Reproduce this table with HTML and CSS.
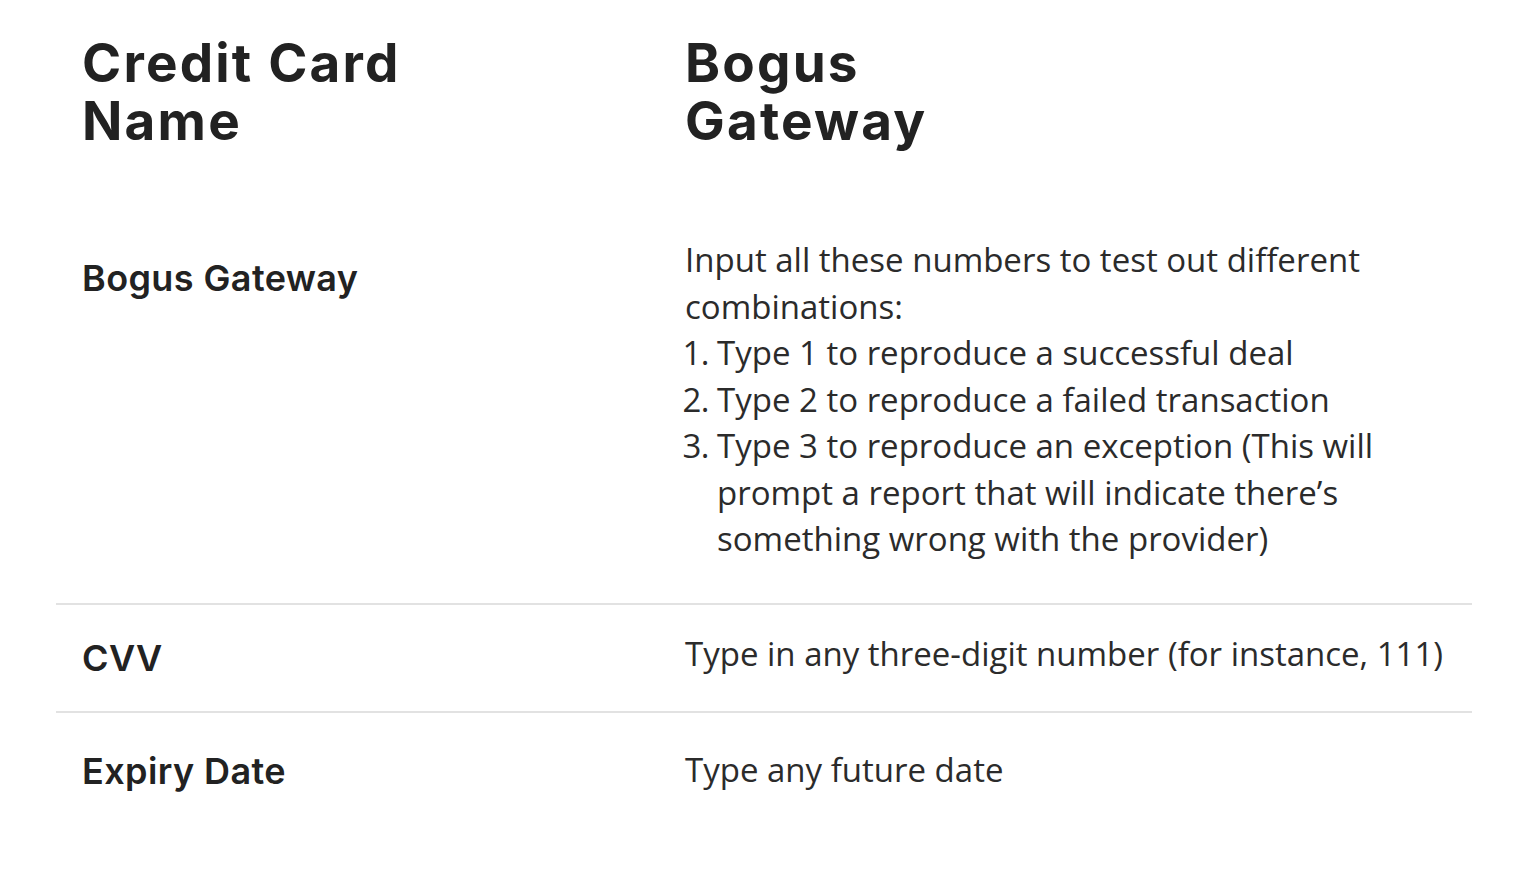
FILE: index.html
```html
<!DOCTYPE html>
<html lang="en">
<head>
<meta charset="utf-8">
<title>Bogus Gateway test values</title>
<link rel="stylesheet" href="styles.css">
</head>
<body>
<div class="table">
  <div class="row head">
    <div class="cell key"><h2 class="th">Credit Card<br>Name</h2></div>
    <div class="cell val"><h2 class="th">Bogus<br>Gateway</h2></div>
  </div>
  <div class="row first">
    <div class="cell key"><span class="label">Bogus Gateway</span></div>
    <div class="cell val">
      <p class="desc">Input all these numbers to test out different combinations:</p>
      <ol class="list">
        <li>Type 1 to reproduce a successful deal</li>
        <li>Type 2 to reproduce a failed transaction</li>
        <li>Type 3 to reproduce an exception (This will prompt a report that will indicate there’s something wrong with the provider)</li>
      </ol>
    </div>
  </div>
  <div class="row mid">
    <div class="cell key"><span class="label">CVV</span></div>
    <div class="cell val"><p class="desc raised">Type in any three-digit number (for instance, 111)</p></div>
  </div>
  <div class="row last">
    <div class="cell key"><span class="label">Expiry Date</span></div>
    <div class="cell val"><p class="desc">Type any future date</p></div>
  </div>
</div>
</body>
</html>
```

FILE: styles.css
```css
html, body {
  margin: 0;
  padding: 0;
  background: #ffffff;
}

body {
  color: #2b2b2b;
  font-family: "Open Sans", "Noto Sans", sans-serif;
}

.table {
  margin: 0 56px;
  display: flex;
  flex-direction: column;
}

.row {
  display: grid;
  grid-template-columns: 603px 1fr;
}

.cell {
  padding: 0 26px;
}

.th {
  margin: 0;
  font-family: "Inter", "Liberation Sans", sans-serif;
  font-weight: 700;
  font-size: 53px;
  line-height: 58px;
  color: #222222;
  letter-spacing: 2.2px;
}

.head {
  padding-top: 34px;
  padding-bottom: 87px;
}

.label {
  display: block;
  font-family: "Inter", "Liberation Sans", sans-serif;
  font-weight: 600;
  font-size: 36px;
  line-height: 46px;
  color: #222222;
  letter-spacing: 0.4px;
}

.first .key {
  padding-top: 18px;
}

.desc {
  margin: 0;
  font-size: 33px;
  line-height: 46.5px;
}

.desc.raised {
  margin-bottom: 6px;
}

.list {
  margin: 0;
  padding-left: 32px;
  font-size: 33px;
  line-height: 46.5px;
}

.list li {
  padding-left: 0;
}

.list li::marker {
  letter-spacing: -0.5px;
}

.first {
  padding-bottom: 40px;
  border-bottom: 2px solid #e2e2e2;
}

.mid {
  align-items: center;
  height: 106px;
  border-bottom: 2px solid #e2e2e2;
}

.last {
  align-items: center;
  height: 116px;
}
```
